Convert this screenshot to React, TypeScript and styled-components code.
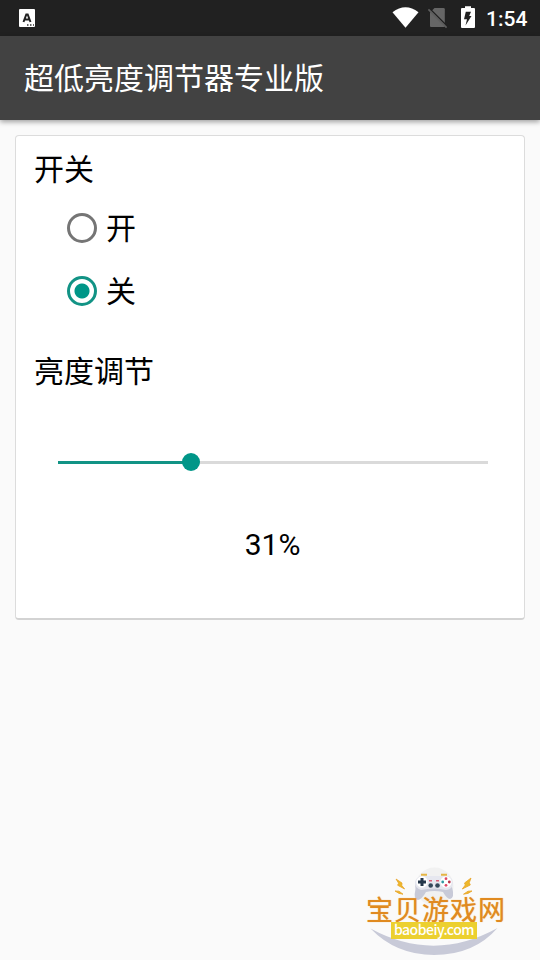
import React, { useState } from 'react';
import styled, { createGlobalStyle } from 'styled-components';

const GlobalStyle = createGlobalStyle`
  * { box-sizing: border-box; }
  body {
    margin: 0;
    background: #fafafa;
    font-family: Roboto, "Noto Sans CJK SC", sans-serif;
    color: #000;
  }
`;

const Screen = styled.div`
  position: relative;
  display: flex;
  flex-direction: column;
  height: 960px;
  width: 540px;
  overflow: hidden;
  background: #fafafa;
`;

const StatusBar = styled.header`
  display: flex;
  justify-content: space-between;
  height: 36px;
  flex: none;
  background: #212121;
`;

const StatusIcons = styled.svg`
  display: block;
`;

const StatusRight = styled.div`
  display: flex;
  padding-right: 12px;
`;

const Clock = styled.time`
  width: 42px;
  font-size: 21px;
  font-weight: 500;
  line-height: 38px;
  color: #fff;
  white-space: nowrap;
`;

const AppBar = styled.div`
  display: flex;
  align-items: center;
  flex: none;
  height: 84px;
  padding: 2px 24px 0;
  background: #424242;
  box-shadow: 0 2px 5px rgba(0, 0, 0, 0.36);
`;

const Title = styled.h1`
  margin: 0;
  font-size: 30px;
  font-weight: 400;
  line-height: 44px;
  color: #fff;
`;

const Card = styled.main`
  display: flex;
  flex-direction: column;
  flex: none;
  height: 485px;
  margin: 15px 15px 0;
  padding: 12px 13px 0 18px;
  background: #fff;
  border: 1px solid #dcdcdc;
  border-bottom: 2px solid #d3d3d3;
  border-radius: 4px;
`;

const SectionTitle = styled.h2<{ $top?: number }>`
  margin: ${({ $top = 0 }) => $top}px 0 0;
  font-size: 30px;
  font-weight: 400;
  line-height: 44px;
`;

const RadioGroup = styled.div`
  display: flex;
  flex-direction: column;
  gap: 15px;
  padding: 12px 0 0 33px;
`;

const RadioRow = styled.label`
  display: flex;
  align-items: center;
  gap: 9px;
  height: 48px;
  cursor: pointer;
`;

const RadioText = styled.span`
  padding-top: 2px;
  font-size: 30px;
  line-height: 44px;
`;

const RadioInput = styled.input`
  appearance: none;
  width: 30px;
  height: 30px;
  margin: 0;
  border: 3px solid #757575;
  border-radius: 50%;

  &:checked {
    border-color: #129385;
    background: radial-gradient(circle at center, #009688 7px, transparent 8px);
  }
`;

const Slider = styled.input`
  appearance: none;
  display: block;
  width: 448px;
  height: 18px;
  margin: 59px 0 0 15px;
  background: transparent;

  &::-webkit-slider-runnable-track {
    height: 3px;
    background: linear-gradient(to right, #129385 var(--level), #dadada var(--level)) center / 430px 3px no-repeat;
  }
  &::-webkit-slider-thumb {
    appearance: none;
    width: 18px;
    height: 18px;
    margin-top: -7.5px;
    border-radius: 50%;
    background: #009688;
  }
`;

const Value = styled.output`
  display: block;
  margin-top: 56px;
  font-size: 30px;
  line-height: 36px;
  text-align: center;
`;

const Brand = styled.aside`
  position: absolute;
  left: 364px;
  top: 864px;
  width: 144px;
  height: 96px;
  display: flex;
  flex-direction: column;
  align-items: center;
  padding-top: 31px;
`;

const BrandArt = styled.svg`
  position: absolute;
  inset: 0;
`;

const BrandName = styled.div`
  position: relative;
  font-family: "Noto Sans CJK SC", sans-serif;
  font-size: 27px;
  font-weight: 400;
  letter-spacing: 1px;
  line-height: 27px;
  color: #e08a20;
  white-space: nowrap;
  text-shadow: 0 0 1px #efb055;
`;

const BrandSite = styled.div`
  position: relative;
  width: 86px;
  height: 17px;
  margin-right: 4px;
  background: #ecd02f;
  font-family: "Noto Sans CJK SC", sans-serif;
  font-size: 14px;
  font-weight: 500;
  letter-spacing: -0.5px;
  line-height: 15px;
  text-align: center;
  color: #fff;
`;

const KeyboardIcon = () => (
  <StatusIcons width="48" height="36" viewBox="0 0 48 36">
    <rect x="19" y="9" width="16" height="18" rx="1" fill="#fff" />
    <path d="M23.5 22 26.3 14.5h1.4l2.8 7.5M24.5 19.5h5" fill="none" stroke="#212121" strokeWidth="2" />
    <path d="M27 25h1.5M30 25h1.5M33 25h1" stroke="#333" strokeWidth="1.5" />
  </StatusIcons>
);

const SystemIcons = () => (
  <StatusIcons width="98" height="36" viewBox="388 0 98 36">
    <path d="M392.5 12.2Q405.5 2.2 418.5 12.2L405.5 27.7Z" fill="#fff" />
    <path d="M434.5 8h9q1.3 0 1.3 1.3V26q0 1-1 1H431q-1 0-1-1V12.5Z" fill="#666" />
    <path d="m429.5 8.5 18 18" stroke="#212121" strokeWidth="1.6" />
    <path d="m428.4 9.4 18.2 18.2" stroke="#5e5e5e" strokeWidth="1.7" />
    <path d="M461 9q0-1 1-1h3V6.2h6V8h3q1 0 1 1v18q0 1-1 1h-12q-1 0-1-1Z" fill="#fff" />
    <path d="M465.8 11.8h5.2l-1.8 4.2h2.3l-6 9.5 1.5-6.3h-3z" fill="#212121" />
  </StatusIcons>
);

const BrandDrawing = () => (
  <BrandArt width="144" height="96" viewBox="364 864 144 96">
    <circle cx="434.5" cy="886.5" r="19" fill="#f1f1f1" />
    <path d="M370.5 928.5Q434 963 497.5 928Q474 955 434 955Q396 955 370.5 928.5Z" fill="#c8cad8" />
    <path d="M421 874.8h6M441 874.8h6" stroke="#e5b545" strokeWidth="2" />
    <path d="M422 876Q414 877 415.5 889Q413 900 418 900Q422 899 426 892Q434 890 443 892Q447 899 450 899Q455 898 452 887Q453 876 445 876Z" fill="#c8cad8" />
    <path d="M421 876h25q7 1 7 7t-7 7q-12-3-25 0q-6-2-6-7t6-7Z" fill="#e6e7ef" />
    <circle cx="422" cy="882" r="5.7" fill="#fff" />
    <circle cx="446" cy="882" r="5.7" fill="#fff" />
    <path d="M422 878v8M418 882h8" stroke="#25374b" strokeWidth="3" />
    <circle cx="446" cy="878.7" r="1.4" fill="#df4867" />
    <circle cx="446" cy="885.3" r="1.4" fill="#df4867" />
    <circle cx="442.7" cy="882" r="1.4" fill="#3199a2" />
    <circle cx="449.3" cy="882" r="1.4" fill="#b73349" />
    <circle cx="430.7" cy="885.5" r="2.3" fill="#34485a" />
    <circle cx="437.5" cy="885.5" r="2.3" fill="#34485a" />
    <path d="M429 880.8h3M436 880.8h3" stroke="#d95e77" strokeWidth="1.4" />
    <path d="m396 879 6 4-.2 2.5 2.8 3.5-7-3.8 1-2ZM395 891l4 .2 4 3-4-.8ZM471 878l-6.5 5 .8 2-3 4 8-4-1-2.3ZM472 891l-4 .2-4.5 3 4.5-.8Z" fill="#edb82b" stroke="#e8a52a" strokeWidth=".8" />
  </BrandArt>
);

export default function App() {
  const [enabled, setEnabled] = useState(false);
  const [level, setLevel] = useState(31);

  return (
    <>
      <GlobalStyle />
      <Screen>
        <StatusBar>
          <KeyboardIcon />
          <StatusRight>
            <SystemIcons />
            <Clock>1:54</Clock>
          </StatusRight>
        </StatusBar>
        <AppBar>
          <Title>超低亮度调节器专业版</Title>
        </AppBar>
        <Card>
          <SectionTitle>开关</SectionTitle>
          <RadioGroup>
            <RadioRow>
              <RadioInput type="radio" name="power" checked={enabled} onChange={() => setEnabled(true)} />
              <RadioText>开</RadioText>
            </RadioRow>
            <RadioRow>
              <RadioInput type="radio" name="power" checked={!enabled} onChange={() => setEnabled(false)} />
              <RadioText>关</RadioText>
            </RadioRow>
          </RadioGroup>
          <SectionTitle $top={35}>亮度调节</SectionTitle>
          <Slider
            type="range"
            min={0}
            max={100}
            value={level}
            onChange={(e) => setLevel(Number(e.target.value))}
            style={{ '--level': `${level}%` } as React.CSSProperties}
          />
          <Value>{level}%</Value>
        </Card>
        <Brand>
          <BrandDrawing />
          <BrandName>宝贝游戏网</BrandName>
          <BrandSite>baobeiy.com</BrandSite>
        </Brand>
      </Screen>
    </>
  );
}
